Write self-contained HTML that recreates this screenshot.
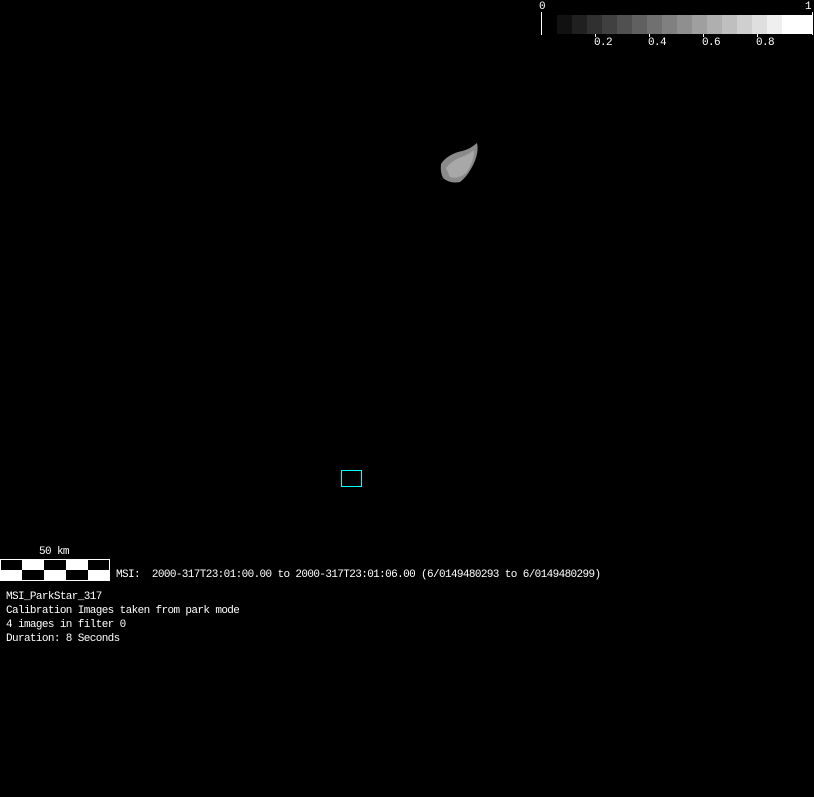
<!DOCTYPE html><html><head><style>
body{margin:0;width:814px;height:797px;background:#000;position:relative;overflow:hidden;font-family:"Liberation Mono","DejaVu Sans Mono",monospace;font-size:11px;letter-spacing:-0.62px;color:#fff}
.t{position:absolute;white-space:pre;line-height:14px}
</style></head><body>
<svg width="814" height="797" style="position:absolute;left:0;top:0">
<rect x="557" y="15" width="15" height="19" fill="#111"/><rect x="572" y="15" width="15" height="19" fill="#202020"/><rect x="587" y="15" width="15" height="19" fill="#303030"/><rect x="602" y="15" width="15" height="19" fill="#404040"/><rect x="617" y="15" width="15" height="19" fill="#505050"/><rect x="632" y="15" width="15" height="19" fill="#606060"/><rect x="647" y="15" width="15" height="19" fill="#707070"/><rect x="662" y="15" width="15" height="19" fill="#808080"/><rect x="677" y="15" width="15" height="19" fill="#8f8f8f"/><rect x="692" y="15" width="15" height="19" fill="#9f9f9f"/><rect x="707" y="15" width="15" height="19" fill="#afafaf"/><rect x="722" y="15" width="15" height="19" fill="#bfbfbf"/><rect x="737" y="15" width="15" height="19" fill="#cfcfcf"/><rect x="752" y="15" width="15" height="19" fill="#dfdfdf"/><rect x="767" y="15" width="15" height="19" fill="#efefef"/><rect x="782" y="15" width="31" height="19" fill="#fff"/>
<line x1="541.5" y1="12" x2="541.5" y2="35" stroke="#fff"/><line x1="812.5" y1="12" x2="812.5" y2="35" stroke="#fff"/>
<g stroke="#fff"><line x1="595.5" y1="34" x2="595.5" y2="37"/><line x1="649.5" y1="34" x2="649.5" y2="37"/><line x1="703.5" y1="34" x2="703.5" y2="37"/><line x1="757.5" y1="34" x2="757.5" y2="37"/></g>
<path d="M441 164 Q446 156 458 152 Q468 150 473 146 L477 143 Q479 152 474 163 Q468 176 460 182 Q450 184 443 178 Q440 172 441 164 Z" fill="#8a8a8a"/>
<path d="M446 168 Q452 160 464 156 Q471 153 474 150 Q474 162 466 173 Q458 180 450 177 Z" fill="#a8a8a8"/>
<rect x="341.5" y="470.5" width="20" height="16" fill="none" stroke="#0ff"/>
<rect x="0.5" y="559.5" width="109" height="21" fill="#fff" stroke="#fff"/>
<rect x="1" y="560" width="21" height="10" fill="#000"/><rect x="44" y="560" width="22" height="10" fill="#000"/><rect x="88" y="560" width="21" height="10" fill="#000"/>
<rect x="22" y="570" width="22" height="10" fill="#000"/><rect x="66" y="570" width="22" height="10" fill="#000"/>
</svg>
<div class="t" style="left:539px;top:0px">0</div>
<div class="t" style="left:805px;top:0px">1</div>
<div class="t" style="left:594px;top:36px">0.2</div>
<div class="t" style="left:648px;top:36px">0.4</div>
<div class="t" style="left:702px;top:36px">0.6</div>
<div class="t" style="left:756px;top:36px">0.8</div>
<div class="t" style="left:39px;top:545px">50 km</div>
<div class="t" style="left:116px;top:568px">MSI:  2000-317T23:01:00.00 to 2000-317T23:01:06.00 (6/0149480293 to 6/0149480299)</div>
<div class="t" style="left:6px;top:590px">MSI_ParkStar_317
Calibration Images taken from park mode
4 images in filter 0
Duration: 8 Seconds</div>
</body></html>
